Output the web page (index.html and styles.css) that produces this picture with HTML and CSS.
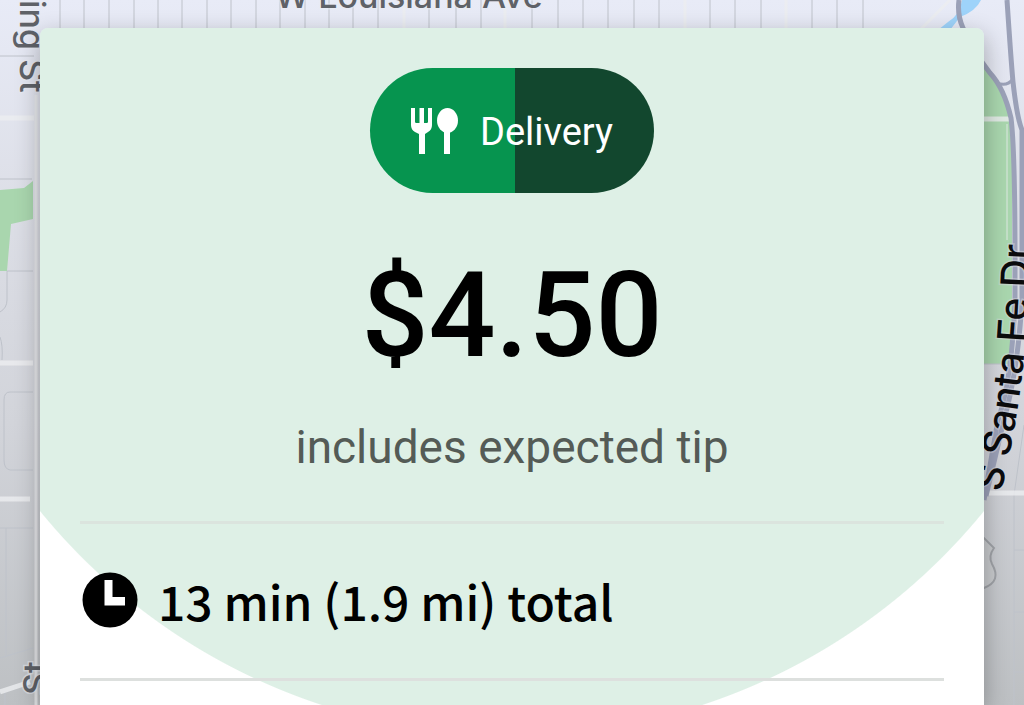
FILE: index.html
```html
<!DOCTYPE html>
<html lang="en">
<head>
    <meta charset="UTF-8">
    <meta name="viewport" content="width=device-width, initial-scale=1.0">
    <title>Delivery offer</title>
    <link rel="stylesheet" href="styles.css">
</head>
<body>
    <div class="screen">
        <svg class="map" viewBox="0 0 1024 705" preserveAspectRatio="xMidYMin slice" aria-hidden="true">
            <defs>
                <linearGradient id="ground" x1="0" y1="0" x2="0" y2="1">
                    <stop offset="0" stop-color="#e8ebf7"/>
                    <stop offset="0.3" stop-color="#dcdee6"/>
                    <stop offset="0.6" stop-color="#d2d4da"/>
                    <stop offset="1" stop-color="#bdc0c3"/>
                </linearGradient>
                <path id="santaFe" d="M1001 493 Q1016 430 1022 376 T1032 200"/>
            </defs>
            <rect width="1024" height="705" fill="url(#ground)"/>

            <!-- parks and river -->
            <path class="park" d="M0 190 L24 188 L33 181 V219 L11 224 L7 271 H0Z"/>
            <path class="park" d="M980 60 L1001 88 L1012 120 V364 H980Z"/>
            <path class="water" d="M938 30 L948 22 Q960 15 962 0 H981 Q976 11 960 17 L950 30Z"/>

            <!-- small streets -->
            <g class="lot">
                <path d="M0 56H34M0 179H32M7 271H33M7 271V300Q7 308 0 312M0 337Q3 345 2 360M33 392H10Q4 392 4 400V460Q4 469 10 470H33"/>
                <path d="M0 528H33M6 528V655M0 658L33 648M5 690V705"/>
                <path d="M60 0V28M84 0V28M109 0V28M134 0V28M158 0V28M182 0V28M207 0V28M231 0V28M256 0V28M280 0V28M305 0V28M329 0V28M353 0V28M378 0V28M429 0V28M456 0V28M481 0V28M532 0V28M558 0V28M583 0V28M608 0V28M634 0V28M659 0V28M710 0V28M735 0V28M761 0V28M812 0V28M837 0V28M863 0V28"/>
                <path d="M1014 495V705M1014 550H1024M1014 612H1024M1014 672H1024M1024 425L1014 495M984 364H1005"/>
            </g>
            <g class="street">
                <path d="M0 118H34M0 363H33M0 499H30M0 692L30 682M984 119H1012M984 493H1024"/>
                <path d="M36 95V705" class="thin"/>
                <path d="M404 0V28M505 0V28M685 0V28M786 0V28M920 30L950 0" class="thin"/>
                <path d="M1007 124V240" class="hair"/>
            </g>

            <!-- highways -->
            <g class="highway">
                <path d="M959 0Q957 15 963 28Q972 50 990 73Q1004 88 1011 118Q1015 150 1015 260V300Q1012 380 998 420L984 500"/>
                <path d="M1007 0Q1011 60 1013 82Q1017 118 1022 130V300Q1018 370 1004 420L986 496"/>
                <path d="M997 83Q1007 87 1013 79" class="ramp"/>
            </g>
            <path class="shield" d="M976 540L984 538L994 548Q988 556 992 564Q1002 581 984 588L976 586Z"/>

            <!-- street names -->
            <text class="road" x="275" y="8">W Louisiana Ave</text>
            <text class="road" transform="translate(20 0) rotate(90)">ing St</text>
            <text class="road" transform="translate(48 695) rotate(-90)">St</text>
            <text class="road major"><textPath href="#santaFe">S Santa Fe Dr</textPath></text>
        </svg>

        <main class="card">
            <div class="badge">
                <svg class="badge-icon" viewBox="0 0 48 48" aria-hidden="true">
                    <path fill="#fff" d="M0 0H4V14Q4 15 5.500 15H8.500V0H13V15H15.500Q17 15 17 14V0H21V17Q21 22 17 24L14 26V46H8V26L4 24Q0 22 0 17Z"/>
                    <ellipse cx="36.500" cy="12.500" rx="10.500" ry="12.500" fill="#fff"/>
                    <path fill="#fff" d="M33 22H39V46H33Z"/>
                </svg>
                <span>Delivery</span>
            </div>
            <h1 class="price">$4.50</h1>
            <p class="note">includes expected tip</p>
            <div class="trip">
                <svg class="clock" viewBox="0 0 56 56" aria-hidden="true">
                    <circle cx="28" cy="28" r="27.500"/>
                    <path fill="#fff" d="M22.500 8H30.500V25H43V33.500H22.500Z"/>
                </svg>
                <span>13 min (1.9 mi) total</span>
            </div>
        </main>
    </div>
</body>
</html>
```
FILE: styles.css
```css
* {
    box-sizing: border-box;
}
body {
    margin: 0;
    font-family: Roboto, "Liberation Sans", sans-serif;
}
.screen {
    position: relative;
    display: flex;
    height: 100vh;
    padding: 28px 40px 0;
    overflow: hidden;
}

/* map behind the card */
.map {
    position: absolute;
    top: 0;
    left: 0;
    width: 100%;
    height: 100%;
}
.park {
    fill: #a9d6ae;
}
.water {
    fill: #9ed3fa;
}
.lot {
    fill: none;
    stroke: #bec2ca;
    stroke-width: 1;
}
.street {
    fill: none;
    stroke: #eceef0;
    stroke-width: 5;
    stroke-opacity: 0.8;
}
.thin {
    stroke-width: 3;
}
.hair {
    stroke-width: 1;
}
.highway {
    fill: none;
    stroke: #9ba1b8;
    stroke-width: 5;
}
.ramp {
    stroke-width: 3;
}
.shield {
    fill: #c9cbce;
    stroke: #a0a3a8;
    stroke-width: 2;
}
.road {
    font-family: Inter, Roboto, sans-serif;
    font-size: 34px;
    font-weight: 500;
    fill: #5f6268;
    stroke: #e9ecf3;
    stroke-width: 3;
    stroke-opacity: 0.5;
    paint-order: stroke;
}
.major {
    font-size: 39px;
    fill: #0b0b0d;
    stroke: #d5d7dd;
}

/* offer card */
.card {
    position: relative;
    flex: 1;
    display: flex;
    flex-direction: column;
    align-items: center;
    padding: 40px 40px 0;
    border-radius: 8px 8px 0 0;
    background: radial-gradient(circle at 50% 99px, #def0e6 608px, #fff 609px);
    box-shadow: 0 8px 24px rgba(0, 0, 0, 0.3);
    color: #000;
}
.badge {
    display: flex;
    align-items: center;
    gap: 21px;
    height: 125px;
    padding: 2px 41px 0;
    border-radius: 63px;
    background: linear-gradient(90deg, #06944f 51%, #12472e 51%);
    color: #fff;
    font-size: 38px;
}
.badge-icon {
    width: 48px;
    height: 48px;
}
.price {
    margin: 53px 0 0;
    font-size: 118px;
    line-height: 140px;
    font-weight: 500;
}
.note {
    margin: 31px 0 0;
    font-size: 46px;
    line-height: 60px;
    color: #545b56;
}
.trip {
    display: flex;
    align-items: center;
    gap: 20px;
    width: 100%;
    height: 160px;
    margin-top: 44px;
    padding: 0 2px 2px;
    border-top: 3px solid #dbe4de;
    border-bottom: 3px solid #dde0de;
    font-family: "Noto Sans CJK JP", "Noto Sans", sans-serif;
    font-size: 48px;
    font-weight: 500;
}
.clock {
    width: 56px;
    height: 56px;
}
```
